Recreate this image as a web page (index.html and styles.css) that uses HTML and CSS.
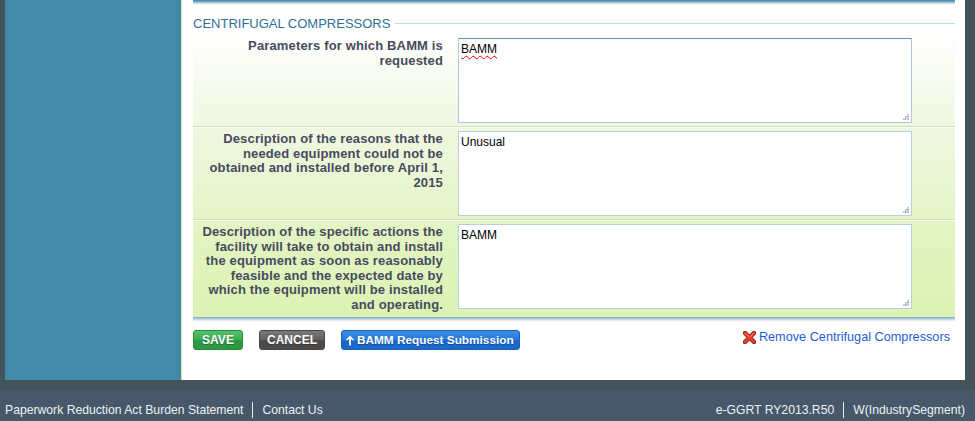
FILE: index.html
```html
<!DOCTYPE html>
<html>
<head>
<meta charset="utf-8">
<title>BAMM Request</title>
<link rel="stylesheet" href="styles.css">
</head>
<body>
<div class="page">
  <aside class="sidebar"></aside>
  <main class="content">
    <div class="prev-section"></div>
    <section class="fieldset">
      <div class="legend"><span class="legend-text">CENTRIFUGAL COMPRESSORS</span><span class="legend-line"></span></div>
      <div class="rows">
        <div class="row row-first">
          <div class="label">Parameters for which BAMM is requested</div>
          <div class="field focused"><span class="misspelled">BAMM</span><span class="grip"></span></div>
        </div>
        <div class="row">
          <div class="label">Description of the reasons that the needed equipment could not be obtained and installed before April 1, 2015</div>
          <div class="field">Unusual<span class="grip"></span></div>
        </div>
        <div class="row row-last">
          <div class="label">Description of the specific actions the facility will take to obtain and install the equipment as soon as reasonably feasible and the expected date by which the equipment will be installed and operating.</div>
          <div class="field">BAMM<span class="grip"></span></div>
        </div>
      </div>
      <div class="fieldset-bottom"></div>
    </section>
    <div class="actions">
      <div class="buttons">
        <button class="btn btn-save">SAVE</button>
        <button class="btn btn-cancel">CANCEL</button>
        <button class="btn btn-submit"><svg class="up-icon" width="10" height="11" viewBox="0 0 10 11"><path d="M5 0.5 L9.5 5.2 L7.4 5.2 L5.9 3.8 L5.9 10.5 L4.1 10.5 L4.1 3.8 L2.6 5.2 L0.5 5.2 Z" fill="#fff"/></svg>BAMM Request Submission</button>
      </div>
      <a class="remove-link" href="#"><svg class="x-icon" width="13" height="13" viewBox="0 0 13 13"><path d="M2 2 L11 11 M11 2 L2 11" stroke="#8a1a10" stroke-width="4.4" stroke-linecap="round"/><path d="M2 2 L11 11 M11 2 L2 11" stroke="#e8402a" stroke-width="2.6" stroke-linecap="round"/><path d="M2.6 2.4 L5.5 5.3 M10.4 2.4 L7.5 5.3" stroke="#ff9a80" stroke-width="0.9" stroke-linecap="round"/></svg>Remove Centrifugal Compressors</a>
    </div>
  </main>
</div>
<footer class="footer">
  <div class="footer-group">
    <a href="#">Paperwork Reduction Act Burden Statement</a>
    <span class="sep"></span>
    <a href="#">Contact Us</a>
  </div>
  <div class="footer-group">
    <span>e-GGRT RY2013.R50</span>
    <span class="sep"></span>
    <span>W(IndustrySegment)</span>
  </div>
</footer>
</body>
</html>
```

FILE: styles.css
```css
* { box-sizing: border-box; }

html, body {
  margin: 0;
  padding: 0;
  background: #44525a;
  font-family: "Liberation Sans", Arial, sans-serif;
  height: 421px;
  overflow: hidden;
}

.page {
  display: flex;
  height: 380px;
  padding: 0 10px 0 5px;
  margin-bottom: 10px;
}

.sidebar {
  width: 177px;
  background: #4389aa;
  border-right: 1px solid #d5eaa8;
}

.content {
  flex: 1;
  background: #fff;
  padding: 0 10px 0 11px;
  display: flex;
  flex-direction: column;
}

.prev-section {
  height: 5px;
  background: linear-gradient(#4e8fb4 0, #4e8fb4 1px, #8bb4cc 2px, #c9d6de 3px, #e8ecef 4px, #fff 5px);
}

.fieldset {
  margin-top: 11px;
}

.legend {
  display: flex;
  align-items: center;
  height: 14px;
}

.legend-text {
  font-size: 13px;
  color: #2e6f95;
  line-height: 15px;
  padding-right: 5px;
  white-space: nowrap;
}

.legend-line {
  flex: 1;
  height: 1px;
  background: #b6dfec;
  margin-top: 1px;
}

.rows {
  background: linear-gradient(#ffffff 0%, #f1f8e4 30%, #eaf6d4 50%, #e2f4c2 72%, #dcf3b3 100%);
}

.row {
  display: grid;
  grid-template-columns: 265px 454px;
  padding: 4px 0 3px;
  border-top: 1px solid #cfe2bb;
  box-shadow: inset 0 1px 0 #f8fcef;
}

.row-first {
  border-top: none;
  box-shadow: none;
  padding-top: 8px;
}

.row-last {
  padding-bottom: 4px;
}

.label {
  font-weight: bold;
  font-size: 13px;
  line-height: 14.6px;
  letter-spacing: 0.15px;
  color: #474a5e;
  text-align: right;
  padding: 1px 15px 0 0;
}

.field {
  position: relative;
  height: 85px;
  background: #fff;
  border: 1px solid #b7cfe6;
  font-size: 12px;
  line-height: 14px;
  color: #000;
  padding: 3px 2px;
}

.field.focused {
  border-color: #a9c9e6;
  border-top-color: #5b93c2;
}

.misspelled {
  text-decoration: underline wavy #e00000;
  text-decoration-thickness: 1px;
  text-underline-offset: 2px;
}

.grip {
  position: absolute;
  right: 2px;
  bottom: 2px;
  width: 7px;
  height: 7px;
  background:
    radial-gradient(circle, #9aa0a8 0.8px, transparent 1px) 0 0 / 2.4px 2.4px;
  clip-path: polygon(100% 0, 100% 100%, 0 100%);
}

.fieldset-bottom {
  height: 5px;
  background: linear-gradient(#88b9d4 0, #88b9d4 1px, #c2ced6 2px, #dde3e7 3px, #eff2f4 4px, #fff 5px);
}

.actions {
  display: flex;
  justify-content: space-between;
  align-items: flex-start;
  margin-top: 4px;
}

.buttons {
  display: flex;
  gap: 16px;
  padding-top: 4px;
}

.btn {
  height: 20px;
  border: 1px solid rgba(0,0,0,0.18);
  border-radius: 3px;
  color: #fff;
  font-family: "Liberation Sans", Arial, sans-serif;
  font-weight: bold;
  font-size: 12px;
  line-height: 18px;
  padding: 0;
  text-shadow: 0 1px 0 rgba(0,0,0,0.3);
  display: flex;
  align-items: center;
  justify-content: center;
  cursor: pointer;
}

.btn-save {
  width: 50px;
  background: linear-gradient(#53c26a 0%, #37ab4f 50%, #2a9842 51%, #2c9a44 100%);
  border-color: #2a8a3e;
}

.btn-cancel {
  width: 66px;
  background: linear-gradient(#7a7a7a 0%, #5e5e5e 50%, #4d4d4d 51%, #4a4a4a 100%);
  border-color: #444;
}

.btn-submit {
  width: 179px;
  background: linear-gradient(#3b8ee8 0%, #2378dc 50%, #1766c9 51%, #1b69cc 100%);
  border-color: #1a5fb8;
  gap: 2px;
  justify-content: flex-start;
  padding-left: 3px;
  font-size: 11.8px;
}

.up-icon {
  display: block;
  margin-top: 2px;
}

.remove-link {
  display: flex;
  align-items: center;
  gap: 3px;
  font-size: 12.7px;
  line-height: 15px;
  color: #1d5ed4;
  text-decoration: none;
  padding-right: 5px;
  padding-top: 4px;
}

.x-icon {
  display: block;
}

.footer {
  height: 31px;
  background: #465869;
  display: flex;
  justify-content: space-between;
  align-items: center;
  padding: 8px 10px 0 5px;
  font-size: 12.2px;
  color: #eef1f3;
}

.footer-group {
  display: flex;
  align-items: center;
}

.footer a, .footer span {
  color: #eef1f3;
  text-decoration: none;
}

.footer .sep {
  width: 1px;
  height: 16px;
  background: #e6eaee;
  margin: 0 9px;
}
```
